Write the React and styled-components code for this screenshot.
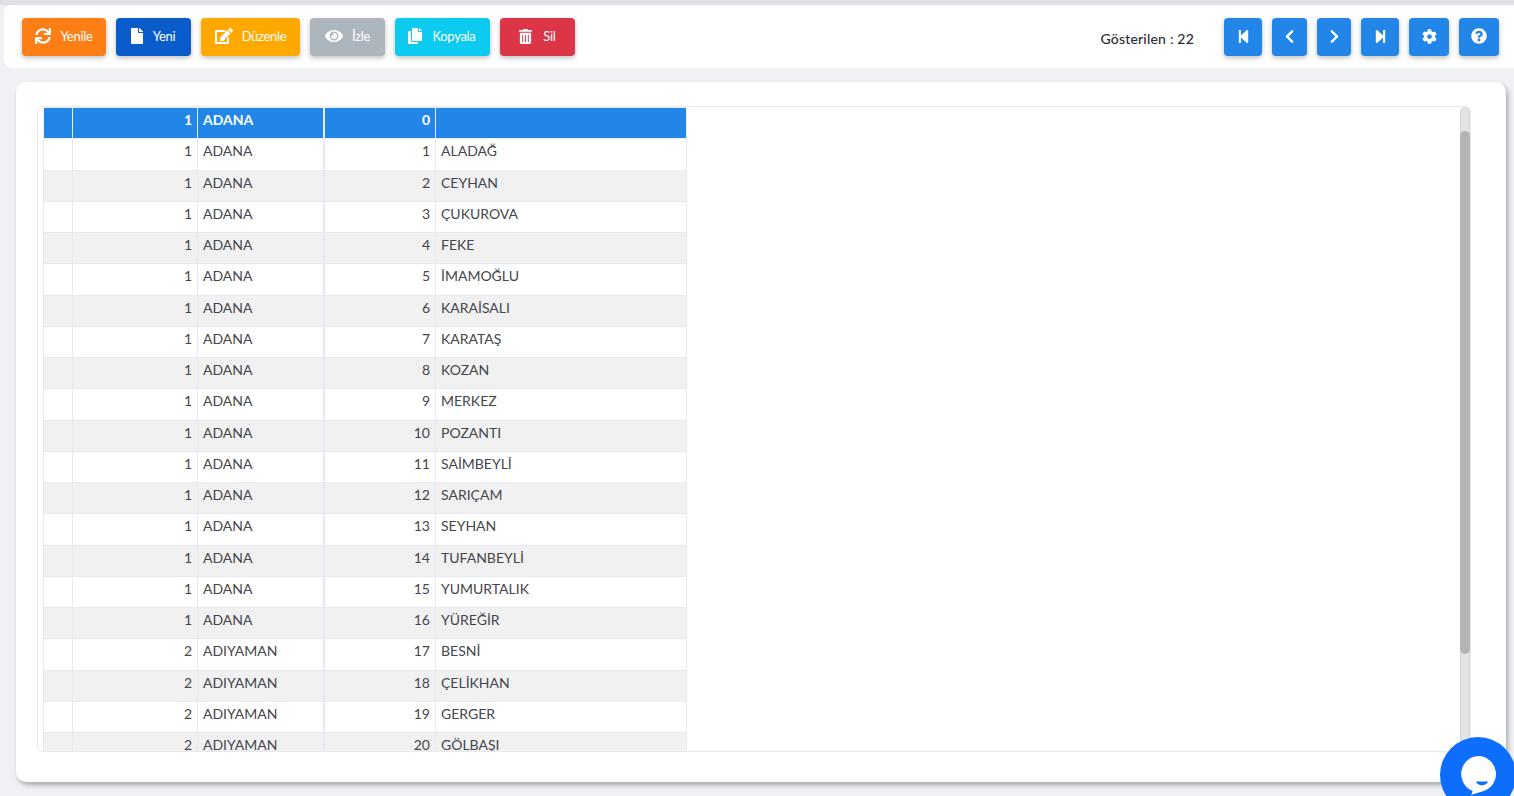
import styled, { createGlobalStyle } from "styled-components";
import {
  FaSync, FaFile, FaEdit, FaEye, FaCopy, FaTrashAlt,
  FaStepBackward, FaChevronLeft, FaChevronRight, FaStepForward, FaCog, FaQuestionCircle,
} from "react-icons/fa";

const districts = [
  "ALADAĞ", "CEYHAN", "ÇUKUROVA", "FEKE", "İMAMOĞLU", "KARAİSALI", "KARATAŞ", "KOZAN",
  "MERKEZ", "POZANTI", "SAİMBEYLİ", "SARIÇAM", "SEYHAN", "TUFANBEYLİ", "YUMURTALIK", "YÜREĞİR",
  "BESNİ", "ÇELİKHAN", "GERGER", "GÖLBAŞI",
];

const rows = [
  { cityId: 1, city: "ADANA", id: 0, name: "" },
  ...districts.map((name, i) => ({
    cityId: i < 16 ? 1 : 2,
    city: i < 16 ? "ADANA" : "ADIYAMAN",
    id: i + 1,
    name,
  })),
];

const actions = [
  { label: "Yenile", icon: FaSync, color: "#fd7e14", width: 84, gap: 9, size: 16, trim: 0 },
  { label: "Yeni", icon: FaFile, color: "#0b5ccb", width: 75, gap: 8, size: 16, trim: 3 },
  { label: "Düzenle", icon: FaEdit, color: "#ffa900", width: 99, gap: 9, size: 18, trim: 0 },
  { label: "İzle", icon: FaEye, color: "#adb5bd", width: 75, gap: 9, size: 18, trim: 0 },
  { label: "Kopyala", icon: FaCopy, color: "#0dcaf0", width: 95, gap: 9, size: 16, trim: 2 },
  { label: "Sil", icon: FaTrashAlt, color: "#dc3545", width: 75, gap: 10, size: 15, trim: 1 },
];

const navs = [
  { icon: FaStepBackward, width: 38, size: 15 },
  { icon: FaChevronLeft, width: 35, size: 15 },
  { icon: FaChevronRight, width: 34, size: 15 },
  { icon: FaStepForward, width: 38, size: 15 },
  { icon: FaCog, width: 40, size: 15 },
  { icon: FaQuestionCircle, width: 40, size: 16 },
];

const App = () => (
  <>
    <GlobalStyle />
    <Page>
      <TopStrip />
      <Toolbar>
        <Actions>
          {actions.map(({ label, icon: Icon, color, width, gap, size, trim }) => (
            <ActionButton key={label} color={color} width={width} gap={gap} trim={trim}>
              <Icon size={size} />
              {label}
            </ActionButton>
          ))}
        </Actions>
        <Counter>Gösterilen : 22</Counter>
        <Navs>
          {navs.map(({ icon: Icon, width, size }, index) => (
            <NavButton key={index} width={width}>
              <Icon size={size} />
            </NavButton>
          ))}
        </Navs>
      </Toolbar>
      <Card>
        <TableBox>
          <Viewport>
            <Table>
              <colgroup>
                <col width="29" />
                <col width="125" />
                <col width="126" />
                <col width="112" />
                <col width="251" />
              </colgroup>
              <tbody>
                {rows.map((row, index) => (
                  <Row key={row.id} selected={index === 0} striped={index % 2 === 0}>
                    <Cell selected={index === 0} />
                    <NumCell selected={index === 0}>{row.cityId}</NumCell>
                    <CityCell selected={index === 0}>{row.city}</CityCell>
                    <NumCell selected={index === 0}>{row.id}</NumCell>
                    <Cell selected={index === 0}>{row.name}</Cell>
                  </Row>
                ))}
              </tbody>
            </Table>
          </Viewport>
          <ScrollTrack>
            <ScrollThumb />
          </ScrollTrack>
        </TableBox>
      </Card>
      <ChatBubble>
        <svg width="42" height="42" viewBox="0 0 42 42">
          <path d="M21 2a18 18 0 0 1 5 35.3c-4 1-8 2.200-12 3.700 1-1.500 1.500-2.700 1.500-4.300A18 18 0 0 1 21 2z" fill="#fff" />
          <path d="M19 27.500h12c-1 2.500-3 3.800-6 3.800-3 0-5-1.300-6-3.800z" fill="#0d6efd" />
        </svg>
      </ChatBubble>
    </Page>
  </>
);

const GlobalStyle = createGlobalStyle`
  html, body {
    margin: 0;
    height: 100%;
    overflow: hidden;
    background: #f0f1f5;
    font-family: "Lato", "Noto Sans", sans-serif;
  }
`;

const Page = styled.div`
  position: relative;
  height: 796px;
  overflow: hidden;
`;

const TopStrip = styled.div`
  height: 5px;
  background: #dfe0e5;
`;

const Toolbar = styled.div`
  display: flex;
  align-items: center;
  height: 63px;
  box-sizing: border-box;
  margin: 0 0 14px 4px;
  padding: 1px 15px 0 18px;
  background: #fff;
  border-radius: 8px 0 0 8px;
`;

const Actions = styled.div`
  display: flex;
  gap: 10px;
`;

const ActionButton = styled.button`
  display: flex;
  align-items: center;
  justify-content: center;
  gap: ${({ gap }) => gap}px;
  width: ${({ width }) => width}px;
  height: 38px;
  padding: 0 ${({ trim }) => trim}px 2px 0;
  border: 0;
  border-radius: 4px;
  background: ${({ color }) => color};
  color: #fff;
  font-family: "Lato", sans-serif;
  font-size: 13px;
  letter-spacing: -0.3px;
  box-shadow: 0 2px 5px rgba(0, 0, 0, 0.25);
`;

const Counter = styled.span`
  margin: 3px 30px 0 auto;
  font-size: 14px;
  font-weight: 500;
  letter-spacing: 0.2px;
  color: #2a2d33;
`;

const Navs = styled.div`
  display: flex;
  gap: 10px;
`;

const NavButton = styled.button`
  display: flex;
  align-items: center;
  justify-content: center;
  width: ${({ width }) => width}px;
  height: 38px;
  padding: 0 0 2px;
  border: 0;
  border-radius: 4px;
  background: #2286e9;
  color: #fff;
  box-shadow: 0 2px 5px rgba(0, 0, 0, 0.25);
`;

const Card = styled.main`
  height: 700px;
  box-sizing: border-box;
  margin: 0 8px 0 16px;
  padding: 24px 35px 30px 21px;
  background: #fff;
  border-radius: 10px;
  box-shadow: 2px 3px 5px rgba(0, 0, 0, 0.3);
`;

const TableBox = styled.div`
  display: flex;
  height: 646px;
  box-sizing: border-box;
  border: 1px solid #e9e9ec;
  border-radius: 6px;
  overflow: hidden;
`;

const Viewport = styled.div`
  flex: 1;
  overflow: hidden;
  padding-left: 5px;
`;

const Table = styled.table`
  width: 643px;
  table-layout: fixed;
  border-collapse: collapse;
  font-size: 14px;
  color: #43464b;
`;

const Row = styled.tr`
  height: 31.25px;
  background: ${({ selected, striped }) => (selected ? "#2286e9" : striped ? "#f1f1f2" : "#fff")};
  color: ${({ selected }) => (selected ? "#fff" : "inherit")};
  font-weight: ${({ selected }) => (selected ? 700 : 400)};
`;

const Cell = styled.td`
  padding: 0 5px 7px 5px;
  border: 1px solid ${({ selected }) => (selected ? "#e9eef8" : "#e6e9f3")};
  white-space: nowrap;
  overflow: hidden;
`;

const NumCell = styled(Cell)`
  text-align: right;
`;

const CityCell = styled(Cell)`
  border-right-width: 2px;
`;

const ScrollTrack = styled.div`
  width: 10px;
  box-sizing: border-box;
  padding-top: 24px;
  background: #e3e3e3;
  border-radius: 5px;
  box-shadow: inset 0 0 2px rgba(0, 0, 0, 0.15);
`;

const ScrollThumb = styled.div`
  height: 523px;
  background: #b4b4b4;
  border-radius: 5px;
`;

const ChatBubble = styled.div`
  position: absolute;
  left: 1440px;
  top: 737px;
  display: flex;
  align-items: center;
  justify-content: center;
  width: 76px;
  height: 76px;
  border-radius: 50%;
  background: #0d6efd;
`;

export default App;
